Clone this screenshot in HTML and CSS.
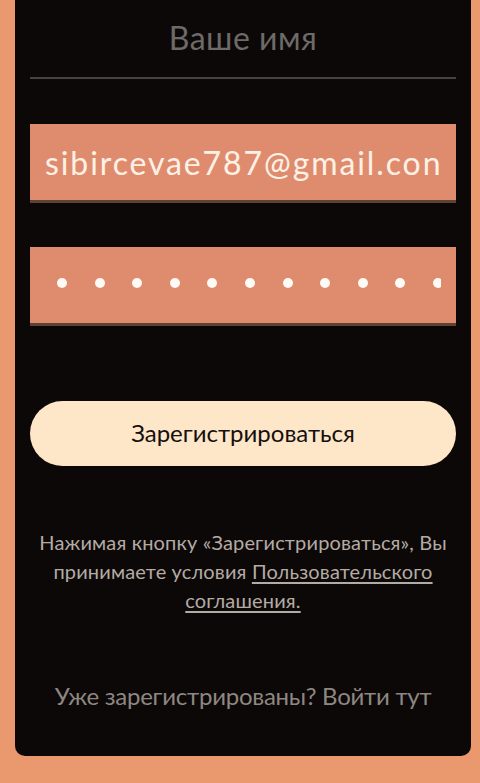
FILE: index.html
```html
<!DOCTYPE html>
<html lang="ru">
<head>
<meta charset="utf-8">
<title>Регистрация</title>
<link rel="stylesheet" href="styles.css">
</head>
<body>
<main class="card">
  <div class="name-field"><span class="placeholder">Ваше имя</span></div>
  <div class="input email"><span class="email-text">sibircevae787@gmail.con</span></div>
  <div class="input password">
    <div class="dots">
      <span></span><span></span><span></span><span></span><span></span><span></span><span></span><span></span><span></span><span></span><span></span><span></span>
    </div>
  </div>
  <button class="submit">Зарегистрироваться</button>
  <p class="terms">Нажимая кнопку «Зарегистрироваться», Вы<br>принимаете условия <a href="#">Пользовательского</a><br><a href="#">соглашения.</a></p>
  <p class="login">Уже зарегистрированы? Войти тут</p>
</main>
</body>
</html>
```
FILE: styles.css
```css
html, body {
  margin: 0;
  padding: 0;
}
body {
  background: #ea986d;
  font-family: Lato, "Noto Sans", sans-serif;
  height: 783px;
  overflow: hidden;
}
.card {
  margin-left: 15px;
  width: 426px;
  height: 756px;
  padding: 0 15px;
  background: #0c0807;
  border-radius: 0 0 10px 10px;
  display: flex;
  flex-direction: column;
}
.name-field {
  height: 77px;
  border-bottom: 2px solid #47423d;
  display: flex;
  justify-content: center;
  align-items: flex-start;
}
.placeholder {
  margin-top: 18px;
  font-size: 32px;
  letter-spacing: 0.5px;
  color: #6d6a67;
  line-height: 40px;
}
.input {
  background: #df8c6e;
  border-bottom: 3px solid #5f4236;
  height: 76px;
  display: flex;
  align-items: center;
  overflow: hidden;
}
.email {
  margin-top: 45px;
  padding: 0 14px 0 15px;
}
.email-text {
  font-size: 32px;
  letter-spacing: 1.9px;
  color: #fdf1e6;
  white-space: nowrap;
}
.password {
  margin-top: 44px;
  padding: 0 15px;
}
.dots {
  display: flex;
  gap: 27.6px;
  padding-left: 12px;
  overflow: hidden;
  width: 384px;
  margin-top: -4px;
}
.dots span {
  flex: none;
  width: 10px;
  height: 10px;
  border-radius: 50%;
  background: #fffaf6;
}
.submit {
  margin-top: 75px;
  height: 65px;
  border: none;
  border-radius: 33px;
  background: #fee6c8;
  color: #15100d;
  font-family: inherit;
  font-size: 24px;
  padding: 0 0 3px;
}
.terms {
  margin: 62px 0 0;
  text-align: center;
  color: #b4aba4;
  font-size: 20px;
  letter-spacing: 0.15px;
  line-height: 29px;
  padding: 0 5px;
}
.terms a {
  color: inherit;
  text-decoration: underline;
  text-underline-offset: 3px;
}
.login {
  margin: 66px 0 0;
  text-align: center;
  color: #8e8781;
  font-size: 24px;
  letter-spacing: -0.25px;
}
```
